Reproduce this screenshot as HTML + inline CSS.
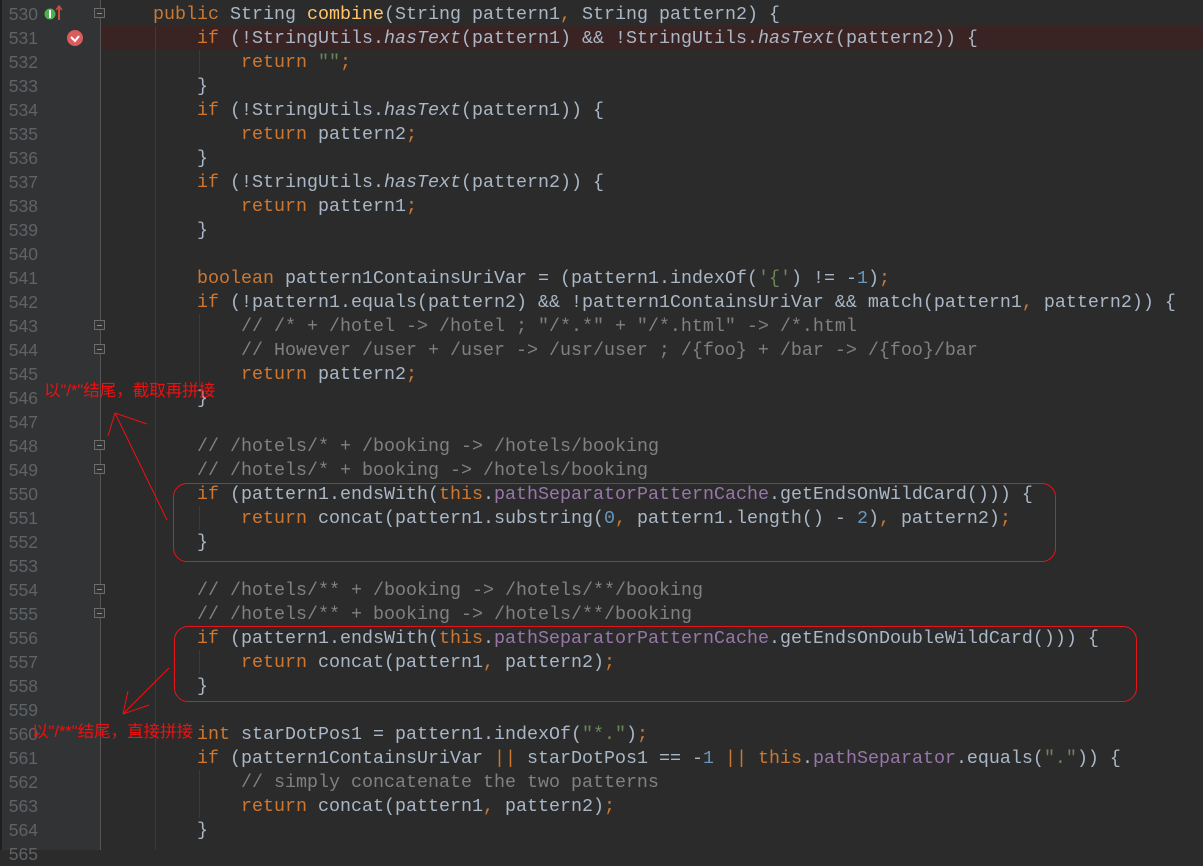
<!DOCTYPE html>
<html><head><meta charset="utf-8"><style>
html,body{margin:0;padding:0;}
body{width:1203px;height:850px;overflow:hidden;background:#2b2b2b;position:relative;font-family:"Liberation Mono",monospace;}
#gut{position:absolute;left:0;top:0;width:100px;height:850px;background:#313335;border-left:2px solid #1e1f20;box-sizing:border-box;}
#sep{position:absolute;left:100px;top:0;width:1px;height:850px;background:#555;}
.ln{position:absolute;left:0;width:38px;text-align:right;color:#606366;font-size:17.5px;height:24px;line-height:24px;font-family:"Liberation Sans",sans-serif;}
#hl{position:absolute;left:101px;top:26px;width:1102px;height:24px;background:#3a2323;}
pre{position:absolute;left:109px;top:3px;margin:0;font-size:18.33px;line-height:24px;color:#a9b7c6;font-family:"Liberation Mono",monospace;}
.k{color:#cc7832}.m{color:#ffc66d}.s{color:#6a8759}.n{color:#6897bb}.c{color:#808080}.f{color:#9876aa}.i{font-style:italic}
.guide{position:absolute;width:1px;background:#3b3b3b;}
.fold{position:absolute;left:94px;width:11px;height:10px;border:1px solid #6b6b6b;box-sizing:border-box;background:#313335;}
.fold:after{content:"";position:absolute;left:2px;right:2px;top:4px;height:1px;background:#8a8a8a;}
.box{position:absolute;border:1px solid #e8141a;border-radius:14px;}
.note{position:absolute;color:#f01010;font-size:16.5px;font-family:"Liberation Sans","Noto Sans CJK SC",sans-serif;white-space:nowrap;}
</style></head><body>
<div id="gut"></div>
<div id="hl"></div>
<div id="sep"></div>
<div class="guide" style="left:155px;top:26px;height:824px"></div>
<div class="guide" style="left:199px;top:50px;height:24px"></div>
<div class="guide" style="left:199px;top:506px;height:24px"></div>
<div class="guide" style="left:199px;top:650px;height:24px"></div>
<div class="guide" style="left:199px;top:770px;height:48px"></div>
<div class="guide" style="left:199px;top:314px;height:72px"></div>

<div class="ln" style="top:2px">530</div><div class="ln" style="top:26px">531</div><div class="ln" style="top:50px">532</div><div class="ln" style="top:74px">533</div><div class="ln" style="top:98px">534</div><div class="ln" style="top:122px">535</div><div class="ln" style="top:146px">536</div><div class="ln" style="top:170px">537</div><div class="ln" style="top:194px">538</div><div class="ln" style="top:218px">539</div><div class="ln" style="top:242px">540</div><div class="ln" style="top:266px">541</div><div class="ln" style="top:290px">542</div><div class="ln" style="top:314px">543</div><div class="ln" style="top:338px">544</div><div class="ln" style="top:362px">545</div><div class="ln" style="top:386px">546</div><div class="ln" style="top:410px">547</div><div class="ln" style="top:434px">548</div><div class="ln" style="top:458px">549</div><div class="ln" style="top:482px">550</div><div class="ln" style="top:506px">551</div><div class="ln" style="top:530px">552</div><div class="ln" style="top:554px">553</div><div class="ln" style="top:578px">554</div><div class="ln" style="top:602px">555</div><div class="ln" style="top:626px">556</div><div class="ln" style="top:650px">557</div><div class="ln" style="top:674px">558</div><div class="ln" style="top:698px">559</div><div class="ln" style="top:722px">560</div><div class="ln" style="top:746px">561</div><div class="ln" style="top:770px">562</div><div class="ln" style="top:794px">563</div><div class="ln" style="top:818px">564</div><div class="ln" style="top:842px">565</div>

<div class="fold" style="top:8px"></div>
<div class="fold" style="top:320px"></div><div class="fold" style="top:344px"></div>
<div class="fold" style="top:440px"></div><div class="fold" style="top:464px"></div>
<div class="fold" style="top:584px"></div><div class="fold" style="top:608px"></div>

<svg style="position:absolute;left:0;top:0" width="1203" height="850">
<circle cx="50" cy="14" r="5.5" fill="#4caf50"/><rect x="49" y="10" width="2" height="8" fill="#fff"/>
<line x1="59" y1="20" x2="59" y2="7" stroke="#d04a3a" stroke-width="2"/><path d="M56 10 L59 6 L62 10" fill="none" stroke="#d04a3a" stroke-width="1.5"/>
<circle cx="75" cy="38" r="8" fill="#db5c5c"/><path d="M71 37 L75 41 L79 36" fill="none" stroke="#fff" stroke-width="2"/>
<g stroke="#f01010" stroke-width="1" fill="none">
<line x1="167" y1="520" x2="115" y2="413"/><line x1="115" y1="413" x2="108" y2="436"/><line x1="115" y1="413" x2="147" y2="424"/>
<line x1="169" y1="668" x2="123" y2="714"/><line x1="123" y1="714" x2="128" y2="691"/><line x1="123" y1="714" x2="149" y2="705"/>
</g>
</svg>

<pre>    <span class="k">public </span>String <span class="m">combine</span>(String pattern1<span class="k">, </span>String pattern2) {
        <span class="k">if </span>(!StringUtils.<span class="i">hasText</span>(pattern1) &amp;&amp; !StringUtils.<span class="i">hasText</span>(pattern2)) {
            <span class="k">return </span><span class="s">""</span><span class="k">;</span>
        }
        <span class="k">if </span>(!StringUtils.<span class="i">hasText</span>(pattern1)) {
            <span class="k">return </span>pattern2<span class="k">;</span>
        }
        <span class="k">if </span>(!StringUtils.<span class="i">hasText</span>(pattern2)) {
            <span class="k">return </span>pattern1<span class="k">;</span>
        }

        <span class="k">boolean </span>pattern1ContainsUriVar = (pattern1.indexOf(<span class="s">'{'</span>) != -<span class="n">1</span>)<span class="k">;</span>
        <span class="k">if </span>(!pattern1.equals(pattern2) &amp;&amp; !pattern1ContainsUriVar &amp;&amp; match(pattern1<span class="k">, </span>pattern2)) {
            <span class="c">// /* + /hotel -&gt; /hotel ; "/*.*" + "/*.html" -&gt; /*.html</span>
            <span class="c">// However /user + /user -&gt; /usr/user ; /{foo} + /bar -&gt; /{foo}/bar</span>
            <span class="k">return </span>pattern2<span class="k">;</span>
        }

        <span class="c">// /hotels/* + /booking -&gt; /hotels/booking</span>
        <span class="c">// /hotels/* + booking -&gt; /hotels/booking</span>
        <span class="k">if </span>(pattern1.endsWith(<span class="k">this</span>.<span class="f">pathSeparatorPatternCache</span>.getEndsOnWildCard())) {
            <span class="k">return </span>concat(pattern1.substring(<span class="n">0</span><span class="k">, </span>pattern1.length() - <span class="n">2</span>)<span class="k">, </span>pattern2)<span class="k">;</span>
        }

        <span class="c">// /hotels/** + /booking -&gt; /hotels/**/booking</span>
        <span class="c">// /hotels/** + booking -&gt; /hotels/**/booking</span>
        <span class="k">if </span>(pattern1.endsWith(<span class="k">this</span>.<span class="f">pathSeparatorPatternCache</span>.getEndsOnDoubleWildCard())) {
            <span class="k">return </span>concat(pattern1<span class="k">, </span>pattern2)<span class="k">;</span>
        }

        <span class="k">int </span>starDotPos1 = pattern1.indexOf(<span class="s">"*."</span>)<span class="k">;</span>
        <span class="k">if </span>(pattern1ContainsUriVar <span class="k">|| </span>starDotPos1 == -<span class="n">1 </span><span class="k">|| this</span>.<span class="f">pathSeparator</span>.equals(<span class="s">"."</span>)) {
            <span class="c">// simply concatenate the two patterns</span>
            <span class="k">return </span>concat(pattern1<span class="k">, </span>pattern2)<span class="k">;</span>
        }
</pre>

<div class="box" style="left:173px;top:483px;width:881px;height:77px"></div>
<div class="box" style="left:174px;top:626px;width:961px;height:74px"></div>
<div class="note" style="left:44px;top:377px">以"/*"结尾，截取再拼接</div>
<div class="note" style="left:32px;top:718px">以"/**"结尾，直接拼接</div>
</body></html>
